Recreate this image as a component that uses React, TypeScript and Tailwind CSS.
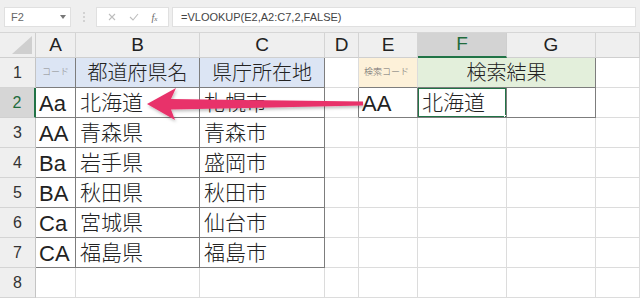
import React from 'react';

const cols = ['A', 'B', 'C', 'D', 'E', 'F', 'G', ''];

const data = [
  ['Aa', '北海道', '札幌市'],
  ['AA', '青森県', '青森市'],
  ['Ba', '岩手県', '盛岡市'],
  ['BA', '秋田県', '秋田市'],
  ['Ca', '宮城県', '仙台市'],
  ['CA', '福島県', '福島市'],
];

const jp = "font-['Liberation_Sans','Noto_Sans_CJK_JP',sans-serif] font-light";

// border presets (full class names)
const rLight = 'border-r border-r-[#dcdcdc]';
const rDark = 'border-r border-r-[#7d7d7d]';
const bLight = 'border-b border-b-[#dcdcdc]';
const bDark = 'border-b border-b-[#7d7d7d]';

function Cell({ className = '', children }: { className?: string; children?: React.ReactNode }) {
  return <div className={`flex items-center overflow-hidden whitespace-nowrap ${className}`}>{children}</div>;
}

function FormulaBar() {
  return (
    <div className="flex h-[33px] items-start gap-[3px] bg-[#efefef] px-[4px] pt-[7px] border-b border-[#d6d6d6]">
      <div className="flex h-[20px] w-[67px] items-center justify-between bg-white border border-[#e0e0e0] pl-[6px] pr-[4px]">
        <span className="text-[11px] text-[#666] font-['Liberation_Sans',sans-serif]">F2</span>
        <svg width="6" height="4" viewBox="0 0 6 4"><path d="M0 0h6L3 4z" fill="#777" /></svg>
      </div>
      <div className="flex h-[20px] w-[19px] flex-col items-center justify-center gap-[2px]">
        <span className="h-[2px] w-[2px] rounded-full bg-[#c9c9c9]" />
        <span className="h-[2px] w-[2px] rounded-full bg-[#c9c9c9]" />
        <span className="h-[2px] w-[2px] rounded-full bg-[#c9c9c9]" />
      </div>
      <div className="flex h-[20px] w-[73px] items-center justify-around bg-white border border-[#e0e0e0] px-[4px]">
        <svg width="8" height="8" viewBox="0 0 8 8"><path d="M1 1l6 6M7 1L1 7" stroke="#bdbdbd" strokeWidth="1.1" /></svg>
        <svg width="10" height="8" viewBox="0 0 10 8"><path d="M1 4l3 3 5-6" stroke="#bdbdbd" strokeWidth="1.1" fill="none" /></svg>
        <span className="text-[10px] italic text-[#666] font-['Liberation_Serif',serif]">f<span className="text-[7px]">x</span></span>
      </div>
      <div className="flex h-[20px] flex-1 items-center bg-white border border-[#e0e0e0] pl-[8px]">
        <span className="text-[11px] text-[#444] font-['Liberation_Sans',sans-serif]">=VLOOKUP(E2,A2:C7,2,FALSE)</span>
      </div>
    </div>
  );
}

function Arrow() {
  return (
    <svg className="pointer-events-none absolute left-0 top-0" width="640" height="301" viewBox="0 0 640 301">
      <defs>
        <filter id="sh" x="-10%" y="-50%" width="120%" height="200%">
          <feDropShadow dx="1" dy="2" stdDeviation="1.5" floodColor="#000" floodOpacity="0.25" />
        </filter>
      </defs>
      <polygon
        points="147,104 176,88 171,99 363,101.5 363,105.5 171,109.5 175,120"
        fill="#e8336b"
        filter="url(#sh)"
      />
    </svg>
  );
}

export default function App() {
  const numCls = "text-[16px] text-[#333] font-['Liberation_Sans',sans-serif]";
  const latin = "text-[22px] text-[#222] font-['Liberation_Sans',sans-serif] pt-[2px]";

  return (
    <div className="relative h-[301px] w-[640px] overflow-hidden bg-white">
      <FormulaBar />
      <div className="grid grid-cols-[36px_40px_124px_125px_34px_59px_89px_89px_1fr] grid-rows-[25px_repeat(8,30px)]">
        {/* header row */}
        <div className="relative bg-[#efefef] border-r border-b border-[#cfcfcf]">
          <svg className="absolute right-[3px] bottom-[3px]" width="20" height="18" viewBox="0 0 20 18">
            <path d="M20 0V18H0z" fill="#cfcfcf" />
          </svg>
        </div>
        {cols.map((c) => (
          <Cell
            key={c || 'x'}
            className={
              c === 'F'
                ? 'justify-center bg-[#d3d3d3] border-r border-r-[#cfcfcf] border-b-2 border-b-[#217346]'
                : 'justify-center bg-[#efefef] border-r border-r-[#d4d4d4] border-b border-b-[#cfcfcf]'
            }
          >
            <span className={`text-[19px] font-['Liberation_Sans',sans-serif] ${c === 'F' ? 'text-[#1f6b3c]' : 'text-[#222]'}`}>{c}</span>
          </Cell>
        ))}

        {/* row 1 */}
        <Cell className="justify-center bg-[#efefef] border-r border-r-[#c4c4c4] border-b border-b-[#d4d4d4]">
          <span className={numCls}>1</span>
        </Cell>
        <Cell className={`bg-[#dce5f4] pl-[6px] ${rDark} ${bDark}`}>
          <span className={`text-[9px] text-[#8a8a8a] ${jp}`}>コード</span>
        </Cell>
        <Cell className={`justify-center bg-[#dce5f4] ${rDark} ${bDark}`}>
          <span className={`text-[20px] text-[#222] ${jp}`}>都道府県名</span>
        </Cell>
        <Cell className={`justify-center bg-[#dce5f4] ${rDark} ${bDark}`}>
          <span className={`text-[20px] text-[#222] ${jp}`}>県庁所在地</span>
        </Cell>
        <Cell className={`${rLight} ${bLight}`} />
        <Cell className={`bg-[#fdf1d9] pl-[5px] ${rLight} ${bDark}`}>
          <span className={`text-[9px] text-[#6f6f6f] ${jp}`}>検索コード</span>
        </Cell>
        <Cell className={`col-span-2 justify-center bg-[#e3efdb] ${rDark} ${bDark}`}>
          <span className={`text-[20px] text-[#222] ${jp}`}>検索結果</span>
        </Cell>
        <Cell className={`${rLight} ${bLight}`} />

        {/* rows 2..7 */}
        {data.map((row, i) => {
          const n = i + 2;
          const sel = n === 2;
          return (
            <React.Fragment key={n}>
              <Cell
                className={
                  sel
                    ? 'justify-center bg-[#d6d6d6] border-r-2 border-r-[#217346] border-b border-b-[#d0d0d0]'
                    : 'justify-center bg-[#efefef] border-r border-r-[#c4c4c4] border-b border-b-[#d4d4d4]'
                }
              >
                <span className={sel ? "text-[16px] text-[#1f6b3c] font-['Liberation_Sans',sans-serif]" : numCls}>{n}</span>
              </Cell>
              <Cell className={`pl-[3px] ${rDark} ${bDark}`}>
                <span className={latin}>{row[0]}</span>
              </Cell>
              <Cell className={`pl-[4px] ${rDark} ${bDark}`}>
                <span className={`text-[21px] text-[#222] ${jp}`}>{row[1]}</span>
              </Cell>
              <Cell className={`pl-[4px] ${rDark} ${bDark}`}>
                <span className={`text-[21px] text-[#222] ${jp}`}>{row[2]}</span>
              </Cell>
              <Cell className={`${sel ? rDark : rLight} ${bLight}`} />
              {sel ? (
                <>
                  <Cell className={`pl-[3px] ${rDark} ${bDark}`}>
                    <span className={latin}>AA</span>
                  </Cell>
                  <Cell className={`relative pl-[4px] ${rDark} ${bDark} shadow-[inset_0_0_0_1px_#217346]`}>
                    <span className={`text-[21px] text-[#222] ${jp}`}>北海道</span>
                    <span className="absolute -bottom-[3px] -right-[3px] h-[5px] w-[5px] bg-[#217346] border border-white" />
                  </Cell>
                  <Cell className={`${rDark} ${bDark}`} />
                </>
              ) : (
                <>
                  <Cell className={`${rLight} ${bLight}`} />
                  <Cell className={`${rLight} ${bLight}`} />
                  <Cell className={`${rLight} ${bLight}`} />
                </>
              )}
              <Cell className={`${rLight} ${bLight}`} />
            </React.Fragment>
          );
        })}

        {/* row 8 */}
        <Cell className="justify-center bg-[#efefef] border-r border-r-[#c4c4c4] border-b border-b-[#d4d4d4]">
          <span className={numCls}>8</span>
        </Cell>
        {cols.map((c) => (
          <Cell key={'r8' + c} className={`${rLight} ${bLight}`} />
        ))}
      </div>
      <Arrow />
    </div>
  );
}
